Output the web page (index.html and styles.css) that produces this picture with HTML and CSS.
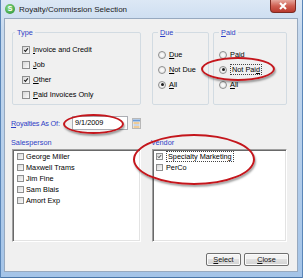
FILE: index.html
```html
<!DOCTYPE html>
<html lang="en">
<head>
    <meta charset="UTF-8" />
    <title>Royalty/Commission Selection</title>
    <link rel="stylesheet" href="styles.css">
</head>
<body>
    <div class="window">
        <div class="titlebar">
            <span class="app-icon">S</span>
            <span class="title">Royalty/Commission Selection</span>
            <span class="close-btn">
                <svg width="10" height="8" viewBox="0 0 10 8"><path d="M2 1 L8 7 M8 1 L2 7" stroke="#fff" stroke-width="2" fill="none"/></svg>
            </span>
        </div>
        <div class="client">
            <div class="filters">
                <fieldset class="group group-type">
                    <legend>Type</legend>
                    <div class="opts">
                        <label class="opt"><span class="box on"><svg viewBox="0 0 8 8"><path d="M1.5 4 L3.2 5.8 L6.5 1.8" /></svg></span><span><u>I</u>nvoice and Credit</span></label>
                        <label class="opt"><span class="box"></span><span><u>J</u>ob</span></label>
                        <label class="opt"><span class="box on"><svg viewBox="0 0 8 8"><path d="M1.5 4 L3.2 5.8 L6.5 1.8" /></svg></span><span><u>O</u>ther</span></label>
                        <label class="opt"><span class="box"></span><span><u>P</u>aid Invoices Only</span></label>
                    </div>
                </fieldset>
                <fieldset class="group group-due">
                    <legend><u>D</u>ue</legend>
                    <div class="opts opts-radio">
                        <label class="opt"><span class="radio"></span><span><u>D</u>ue</span></label>
                        <label class="opt"><span class="radio"></span><span><u>N</u>ot Due</span></label>
                        <label class="opt"><span class="radio on"></span><span><u>A</u>ll</span></label>
                    </div>
                </fieldset>
                <fieldset class="group group-paid">
                    <legend><u>P</u>aid</legend>
                    <div class="opts opts-radio">
                        <label class="opt"><span class="radio"></span><span><u>P</u>aid</span></label>
                        <label class="opt"><span class="radio on"></span><span class="focus">Not Pai<u>d</u></span></label>
                        <label class="opt"><span class="radio"></span><span><u>A</u>ll</span></label>
                    </div>
                </fieldset>
            </div>

            <div class="date-row">
                <span class="caption date-label"><u>R</u>oyalties As Of:</span>
                <div class="date-box">9/1/2009</div>
                <span class="cal-btn">
                    <svg width="9" height="11" viewBox="0 0 9 11">
                        <rect x="0.5" y="0.5" width="8" height="10" fill="#f4f4f4" stroke="#b8b8b8"/>
                        <rect x="1" y="1.5" width="7" height="2" fill="#6c9bd6"/>
                        <rect x="1.5" y="4.5" width="6" height="1" fill="#e8a23c"/>
                        <rect x="1.5" y="6.5" width="6" height="1" fill="#9db8dc"/>
                        <rect x="1.5" y="8.5" width="6" height="1" fill="#e8a23c"/>
                    </svg>
                </span>
            </div>

            <div class="lists">
                <div class="list-col">
                    <div class="caption">Salesperson</div>
                    <div class="listbox list-sales">
                        <div class="item"><span class="box small"></span>George Miller</div>
                        <div class="item"><span class="box small"></span>Maxwell Trams</div>
                        <div class="item"><span class="box small"></span>Jim Fine</div>
                        <div class="item"><span class="box small"></span>Sam Blais</div>
                        <div class="item"><span class="box small"></span>Amort Exp</div>
                    </div>
                </div>
                <div class="list-col">
                    <div class="caption">Vendor</div>
                    <div class="listbox list-vendor">
                        <div class="item"><span class="box small on"><svg viewBox="0 0 8 8"><path d="M1.5 4 L3.2 5.8 L6.5 1.8" /></svg></span><span class="focus">Specialty Marketing</span></div>
                        <div class="item"><span class="box small"></span>PerCo</div>
                    </div>
                </div>
            </div>

            <div class="buttons">
                <button class="btn btn-select"><u>S</u>elect</button>
                <button class="btn btn-close"><u>C</u>lose</button>
            </div>
        </div>

        <!-- red highlight rings drawn over the dialog -->
        <div class="mark mark-paid"></div>
        <div class="mark mark-date"></div>
        <div class="mark mark-vendor"></div>
    </div>
</body>
</html>
```

FILE: styles.css
```css
*{
    box-sizing: border-box;
}
body{
    margin: 0;
    font-family: "Liberation Sans", Arial, sans-serif;
    font-size: 7.3px;
    line-height: 9px;
    color: #000;
}
.window{
    position: relative;
    width: 303px;
    height: 278px;
    display: flex;
    flex-direction: column;
    padding: 0 5px 6px 4px;
    background: linear-gradient(#dce8f5, #c6d9ee 30px, #a4c4e8);
    box-shadow: inset 1px 0 #5a86b8, inset -1px 0 #5a86b8, inset 0 -1px #4a76a8;
}
.titlebar{
    height: 18px;
    display: flex;
    align-items: center;
    padding-left: 1px;
}
.app-icon{
    width: 10px;
    height: 10px;
    border-radius: 50%;
    background: radial-gradient(circle at 40% 35%, #8ddc86, #1d8a2c);
    color: #fff;
    font-size: 7px;
    font-weight: bold;
    line-height: 10px;
    text-align: center;
    margin-top: -1px;
}
.title{
    margin-left: 4px;
    font-size: 8px;
    color: #1a1a1a;
}
.close-btn{
    align-self: flex-start;
    margin-left: auto;
    margin-right: 2px;
    width: 26px;
    height: 13px;
    display: flex;
    align-items: center;
    justify-content: center;
    background: linear-gradient(#e6a89e, #cf5f52 50%, #b9392d);
    border: 1px solid #7c2a22;
    border-top: none;
    border-radius: 0 0 4px 4px;
}
.client{
    flex: 1;
    display: flex;
    flex-direction: column;
    background: #f0f0f0;
    border: 1px solid #97a9bf;
    padding: 9px 8px 0 6px;
}

/* group boxes */
.filters{
    display: flex;
    height: 77px;
    margin-left: 1px;
}
.group{
    margin: 0;
    padding: 0;
    min-width: 0;
    border: 1px solid #d2dbe2;
    border-radius: 2px;
}
.group legend{
    color: #2f3fc6;
    padding: 0 2px;
    margin-left: 2px;
    line-height: 9px;
}
.group-type{
    width: 129px;
}
.group-due{
    width: 57px;
    margin-left: 11px;
}
.group-paid{
    width: 74px;
    margin-left: 4px;
}
.group-due legend,
.group-paid legend{
    margin-left: 5px;
}
.opts{
    padding: 5px 0 0 9px;
}
.opts-radio{
    padding: 10px 0 0 5px;
}
.opt{
    display: flex;
    align-items: center;
    height: 15px;
    gap: 3px;
}
.box{
    width: 8px;
    height: 8px;
    flex: none;
    border: 1px solid #8e8f8f;
    background: linear-gradient(135deg, #d8d8d8, #fbfbfb);
    display: inline-flex;
}
.box svg{
    width: 100%;
    height: 100%;
}
.box path{
    fill: none;
    stroke: #1a1a1a;
    stroke-width: 1.4;
}
.box.small{
    width: 7px;
    height: 7px;
}
.radio{
    width: 8px;
    height: 8px;
    flex: none;
    border: 1px solid #8e8f8f;
    border-radius: 50%;
    background: radial-gradient(#fff, #dedede);
    display: flex;
    align-items: center;
    justify-content: center;
}
.radio.on::after{
    content: "";
    width: 3px;
    height: 3px;
    border-radius: 50%;
    background: #1e1e1e;
}
.focus{
    border: 1px dotted #444;
    padding: 0 1px;
    line-height: 9px;
}

/* date row */
.caption{
    color: #2f3fc6;
}
.date-row{
    display: flex;
    align-items: center;
    height: 14px;
    margin-top: 11px;
}
.date-label{
    width: 61px;
    letter-spacing: -0.2px;
}
.date-box{
    width: 56px;
    height: 14px;
    background: #fff;
    border: 1px solid #abadb3;
    padding-left: 2px;
    line-height: 12px;
}
.cal-btn{
    margin-left: 4px;
    display: flex;
}

/* list boxes */
.lists{
    display: grid;
    grid-template-columns: 130px 136px;
    column-gap: 10px;
    margin-top: 8px;
}
.listbox{
    margin: 2px 0 0 1px;
    height: 93px;
    background: #fff;
    border: 1px solid;
    border-color: #a0a0a0 #fff #fff #a0a0a0;
    box-shadow: inset 1px 1px #696969, inset -1px -1px #e3e3e3;
    padding: 1px 0 0 4px;
}
.list-vendor{
    padding-left: 3px;
}
.item{
    display: flex;
    align-items: center;
    height: 11px;
    gap: 2px;
}
.list-vendor .item{
    gap: 3px;
}

/* buttons */
.buttons{
    display: flex;
    justify-content: flex-end;
    gap: 3px;
    margin-top: 11px;
}
.btn{
    height: 13px;
    padding: 0;
    font: inherit;
    color: #111;
    border: 1px solid #707070;
    border-radius: 2px;
    background: linear-gradient(#f3f3f3 45%, #e0e0e0 50%, #d2d2d2);
    box-shadow: inset 0 0 0 1px #fbfbfb;
}
.btn-select{
    width: 35px;
}
.btn-close{
    width: 45px;
}

/* red highlight rings */
.mark{
    position: absolute;
    border: 2px solid #c4161c;
    border-radius: 50%;
    box-shadow: 1px 2px 2px rgba(0, 0, 0, .35);
}
.mark-paid{
    left: 201px;
    top: 57px;
    width: 74px;
    height: 24px;
}
.mark-date{
    left: 63px;
    top: 114px;
    width: 61px;
    height: 20px;
}
.mark-vendor{
    left: 133px;
    top: 134px;
    width: 122px;
    height: 51px;
}
```
